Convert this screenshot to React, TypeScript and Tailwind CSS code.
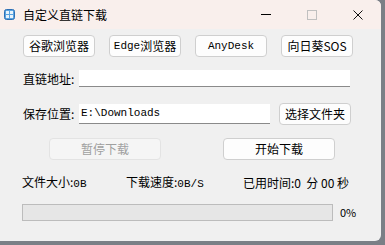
const cjk = { fontFamily: '"Noto Sans CJK SC", "Microsoft YaHei", sans-serif' };
const mono = { fontFamily: '"Liberation Mono", "Noto Sans CJK SC", monospace', fontSize: "11px" };

function Btn({ label, w, m, disabled }: { label: string; w: string; m?: boolean; disabled?: boolean }) {
  return (
    <button
      className={
        "h-[22px] rounded-[4px] border text-[12px] leading-none flex items-center justify-center " +
        w +
        (disabled ? " border-[#e3e3e3] bg-[#f5f5f5] text-[#a0a0a0]" : " border-[#cfcfcf] bg-[#fdfdfd] text-black")
      }
      style={cjk}
    >
      {m ? (
        <>
          <span style={mono}>{label.replace("浏览器", "")}</span>
          {label.includes("浏览器") ? "浏览器" : ""}
        </>
      ) : (
        label
      )}
    </button>
  );
}

export default function App() {
  return (
    <div className="w-[385px] h-[245px] bg-[#7a7f86] overflow-hidden">
      <div className="w-[381px] h-[241px] bg-[#f0f0f0] rounded-br-[6px] rounded-tr-[6px] overflow-hidden flex flex-col" style={cjk}>
        {/* title bar */}
        <div className="h-[29px] bg-[#f9efec] flex items-center shrink-0">
          <svg width="11" height="11" viewBox="0 0 11 11" className="ml-[4px]">
            <rect x="0.5" y="0.5" width="10" height="10" rx="2" fill="#5aa3e0" stroke="#2d6fb5" />
            <rect x="2" y="2" width="3" height="3" fill="#e8f3fc" />
            <rect x="6" y="2" width="3" height="3" fill="#e8f3fc" />
            <rect x="2" y="6" width="3" height="3" fill="#e8f3fc" />
            <rect x="6" y="6" width="3" height="3" fill="#e8f3fc" />
          </svg>
          <span className="ml-[8px] text-[12px] text-black">自定义直链下载</span>
          <div className="ml-auto flex items-center">
            <div className="w-[46px] flex justify-center">
              <div className="w-[10px] h-px bg-black" />
            </div>
            <div className="w-[46px] flex justify-center">
              <div className="w-[10px] h-[10px] border border-[#c0c0c0]" />
            </div>
            <div className="w-[46px] flex justify-center">
              <svg width="10" height="10" viewBox="0 0 10 10">
                <path d="M0.5 0.5 L9.5 9.5 M9.5 0.5 L0.5 9.5" stroke="#111" strokeWidth="1" />
              </svg>
            </div>
          </div>
        </div>

        {/* quick buttons */}
        <div className="flex gap-[14px] pl-[23px] mt-[6px]">
          <Btn label="谷歌浏览器" w="w-[72px]" />
          <Btn label="Edge浏览器" w="w-[72px]" m />
          <Btn label="AnyDesk" w="w-[72px]" m />
          <Btn label="向日葵SOS" w="w-[72px]" />
        </div>

        {/* url */}
        <div className="flex items-center pl-[23px] mt-[13px] h-[17px]">
          <span className="w-[56px] text-[12px] text-black">直链地址:</span>
          <div className="w-[271px] h-[17px] bg-white border-b border-[#8a8a8a]" />
        </div>

        {/* save path */}
        <div className="flex items-center pl-[23px] mt-[16px]">
          <span className="w-[56px] text-[12px] text-black">保存位置:</span>
          <div className="w-[191px] h-[20px] bg-white border-b border-[#8a8a8a] flex items-center pl-[2px] text-black" style={mono}>
            E:\Downloads
          </div>
          <div className="ml-[9px]">
            <Btn label="选择文件夹" w="w-[72px]" />
          </div>
        </div>

        {/* actions */}
        <div className="flex pl-[49px] mt-[13px] gap-[62px]">
          <Btn label="暂停下载" w="w-[112px]" disabled />
          <Btn label="开始下载" w="w-[112px]" />
        </div>

        {/* stats */}
        <div className="flex items-center pl-[22px] mt-[15px] text-[12px] text-black h-[16px]">
          <span className="w-[104px]">
            文件大小:<span style={mono}>0B</span>
          </span>
          <span className="w-[117px]">
            下载速度:<span style={mono}>0B/S</span>
          </span>
          <span>已用时间:0&nbsp;&nbsp;分 00 秒</span>
        </div>

        {/* progress */}
        <div className="flex items-center pl-[22px] mt-[13px]">
          <div className="w-[311px] h-[17px] bg-[#e6e6e6] border border-[#bcbcbc]" />
          <span className="ml-[7px] text-[11px] text-black">0%</span>
        </div>
      </div>
    </div>
  );
}
